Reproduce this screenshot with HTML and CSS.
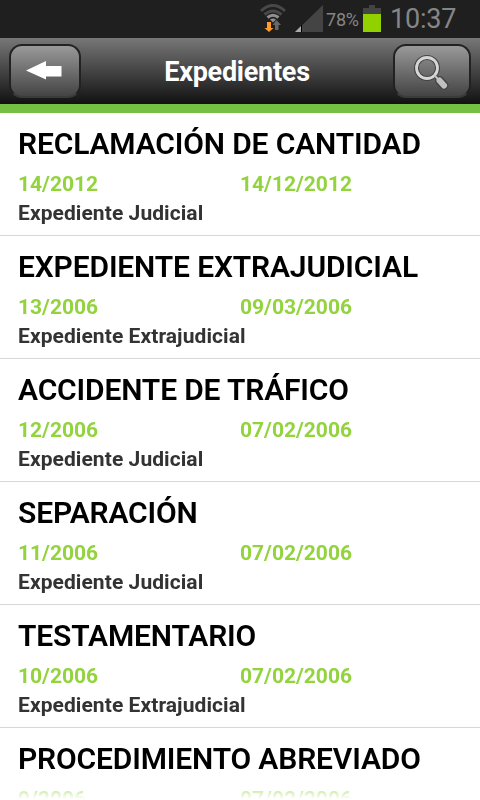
FILE: index.html
```html
<!DOCTYPE html>
<html lang="es">
<head>
  <meta charset="UTF-8" />
  <meta name="viewport" content="width=device-width, initial-scale=1.0"/>
  <title>Expedientes</title>
  <link rel="stylesheet" href="styles.css">
</head>
<body>
  <div class="status-bar">
    <svg class="wifi" width="28" height="28" viewBox="0 0 28 28">
      <g fill="none" stroke-width="3">
        <path d="M2 7 Q14 -4 26 7" stroke="#484848"/>
        <path d="M5.500 10.500 Q14 3.500 22.500 10.500" stroke="#484848"/>
        <path d="M8.500 13.500 Q14 9 19.500 13.500" stroke="#909090"/>
      </g>
      <path d="M11 15.500 Q14 13.500 17 15.500 L14 18.500 Z" fill="#909090"/>
      <path d="M8 18h4v6h2.500L10 28l-4.500-4H8z" fill="#ff9b2b"/>
      <path d="M16 26v-5h-2.500L17.500 16l4.500 5H19.500v5z" fill="#686868"/>
    </svg>
    <svg class="signal" width="28" height="27" viewBox="0 0 28 27">
      <path d="M28 0v27H0z" fill="#444"/>
      <path d="M6 21v6H0z" fill="#aaa"/>
      <path d="M6 20h1v7H6z" fill="#000"/>
    </svg>
    <span class="percent">78%</span>
    <svg class="battery" width="18" height="27" viewBox="0 0 18 27">
      <path d="M6 0h6v3h6v6H0V3h6z" fill="#444"/>
      <path d="M0 9h18v18H0z" fill="#91d100"/>
    </svg>
    <span class="clock">10:37</span>
  </div>

  <header>
    <button class="back" aria-label="Volver">
      <svg width="36" height="20" viewBox="0 0 36 20">
        <path d="M0 9.500L20 0v5h15.500v10.500H20V18.500z" fill="#fff"/>
      </svg>
    </button>
    <h1>Expedientes</h1>
    <button class="search" aria-label="Buscar">
      <svg width="36" height="36" viewBox="0 0 36 36">
        <g fill="none" stroke-linecap="round">
          <circle cx="13" cy="13" r="10.500" stroke="#444" stroke-width="5"/>
          <path d="M20.500 20.500l3 3" stroke="#444" stroke-width="4"/>
          <path d="M25.500 25.500l4.500 5" stroke="#444" stroke-width="9"/>
          <circle cx="13" cy="13" r="10.500" stroke="#d6d6d6" stroke-width="2.800"/>
          <path d="M21 21l3 3" stroke="#c4c4c4" stroke-width="2"/>
          <path d="M25.500 25.500l4.500 5" stroke="#c0c0c0" stroke-width="6"/>
        </g>
      </svg>
    </button>
  </header>

  <ul class="list">
    <li>
      <h2>RECLAMACIÓN DE CANTIDAD</h2>
      <div class="data"><span>14/2012</span><span>14/12/2012</span></div>
      <p>Expediente Judicial</p>
    </li>
    <li>
      <h2>EXPEDIENTE EXTRAJUDICIAL</h2>
      <div class="data"><span>13/2006</span><span>09/03/2006</span></div>
      <p>Expediente Extrajudicial</p>
    </li>
    <li>
      <h2>ACCIDENTE DE TRÁFICO</h2>
      <div class="data"><span>12/2006</span><span>07/02/2006</span></div>
      <p>Expediente Judicial</p>
    </li>
    <li>
      <h2>SEPARACIÓN</h2>
      <div class="data"><span>11/2006</span><span>07/02/2006</span></div>
      <p>Expediente Judicial</p>
    </li>
    <li>
      <h2>TESTAMENTARIO</h2>
      <div class="data"><span>10/2006</span><span>07/02/2006</span></div>
      <p>Expediente Extrajudicial</p>
    </li>
    <li>
      <h2>PROCEDIMIENTO ABREVIADO</h2>
      <div class="data"><span>9/2006</span><span>07/02/2006</span></div>
    </li>
  </ul>
</body>
</html>
```
FILE: styles.css
```css
* {
  box-sizing: border-box;
}

body {
  font-family: Roboto, "Liberation Sans", sans-serif;
  background-color: #fff;
  margin: 0;
  height: 800px;
  display: flex;
  flex-direction: column;
  overflow: hidden;
}

svg {
  display: block;
  flex: none;
}

.status-bar {
  flex: none;
  height: 38px;
  padding: 5px 24px 0 0;
  background-color: #1f1f1f;
  color: #868686;
  display: flex;
  justify-content: flex-end;
  align-items: flex-start;
}

.wifi {
  margin: -1px 8px 0 0;
}

.signal {
  margin-right: 3px;
}

.percent {
  width: 37px;
  font-size: 18px;
  letter-spacing: -0.2px;
  line-height: 30px;
}

.battery {
  margin-right: 9px;
}

.clock {
  width: 66px;
  font-size: 27px;
  letter-spacing: -0.2px;
  line-height: 29px;
  white-space: nowrap;
}

header {
  flex: none;
  height: 75px;
  padding: 6px 9px 0;
  background: linear-gradient(#777, #111);
  border-bottom: 9px solid #74c043;
  background-clip: padding-box;
  display: flex;
  justify-content: space-between;
}

h1 {
  margin: 0;
  color: #fff;
  font-size: 27px;
  font-weight: bold;
  letter-spacing: -0.25px;
  line-height: 56px;
}

button {
  height: 54px;
  padding: 0;
  border: 2px solid #222;
  border-bottom-color: #3a3a3a;
  border-radius: 13px;
  background: linear-gradient(#999, #444);
  display: flex;
  justify-content: center;
  align-items: center;
}

.back {
  width: 72px;
  padding-right: 2px;
}

.search {
  width: 78px;
  padding-top: 3px;
}

.list {
  flex: 1;
  min-height: 0;
  margin: 0;
  padding: 0;
  list-style: none;
  overflow: hidden;
  -webkit-mask-image: linear-gradient(to top, transparent 1px, #000 20px);
  mask-image: linear-gradient(to top, transparent 1px, #000 20px);
}

.list li {
  height: 123px;
  padding: 12px 18px 0;
  border-bottom: 1px solid #d8d8d8;
}

h2 {
  margin: 0;
  color: #000;
  font-size: 30px;
  font-weight: 600;
  letter-spacing: -0.15px;
  line-height: 38px;
  white-space: nowrap;
}

.data {
  display: grid;
  grid-template-columns: 1fr 1fr;
  color: #92d33e;
  font-size: 21px;
  font-weight: bold;
  line-height: 28px;
  margin-top: 7px;
}

.list p {
  margin: 0;
  color: #333;
  font-size: 21px;
  font-weight: bold;
  letter-spacing: 0.07px;
  line-height: 30px;
}
```
